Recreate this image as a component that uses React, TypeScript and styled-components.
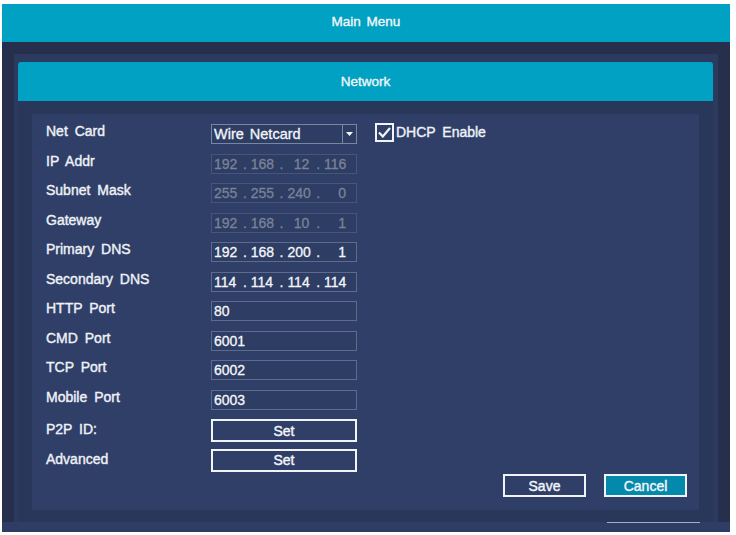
import styled, { createGlobalStyle } from 'styled-components'

const GlobalStyle = createGlobalStyle`
  html, body {
    margin: 0;
    padding: 0;
    background: #ffffff;
  }
  body {
    font-family: "Liberation Sans", Arial, sans-serif;
  }
`

const Screen = styled.div`
  width: 736px;
  height: 535px;
  box-sizing: border-box;
  padding: 4px 6px 3px 2px;
`

const Frame = styled.div`
  display: flex;
  flex-direction: column;
  height: 100%;
  background: #262f4c;
`

const TopBar = styled.div`
  height: 38px;
  box-sizing: border-box;
  padding-bottom: 4px;
  flex-shrink: 0;
  display: flex;
  align-items: center;
  justify-content: center;
  background: #00a1c2;
  color: #f2f6fa;
  font-size: 13.5px;
  -webkit-text-stroke: 0.35px #f2f6fa;
  word-spacing: 2px;
`

const FrameBody = styled.div`
  flex: 1;
  display: flex;
  flex-direction: column;
  padding: 12px 12px 0 12px;
`

const Window = styled.div`
  flex: 1;
  display: flex;
  flex-direction: column;
  background: #2c3a5f;
  padding: 8px 5px 0 4px;
`

const WindowHeader = styled.div`
  height: 39px;
  flex-shrink: 0;
  display: flex;
  align-items: center;
  justify-content: center;
  background: #00a1c2;
  border-radius: 3px 3px 0 0;
  color: #f2f6fa;
  font-size: 13.5px;
  -webkit-text-stroke: 0.35px #f2f6fa;
`

const WindowBody = styled.div`
  flex: 1;
  display: flex;
  background: #29375a;
  padding: 13px 14px 12px 14px;
`

const Content = styled.div`
  flex: 1;
  display: flex;
  flex-direction: column;
  background: #303f67;
  padding: 10px 12px 0 14px;
`

const Form = styled.div`
  display: grid;
  grid-template-columns: 165px 146px 1fr;
  grid-template-rows: repeat(11, 29.5px) 23px;
`

const Label = styled.div<{ $center?: boolean }>`
  color: #eef1f7;
  font-size: 14px;
  -webkit-text-stroke: 0.4px #eef1f7;
  word-spacing: 3px;
  line-height: ${(p) => (p.$center ? '23px' : '20px')};
  margin-top: ${(p) => (p.$center ? '-1px' : '-3px')};
  white-space: nowrap;
`

const Box = styled.div<{ $disabled?: boolean; $border?: string }>`
  box-sizing: border-box;
  height: 20px;
  width: 146px;
  display: flex;
  align-items: center;
  padding-left: 2px;
  border: 1px solid ${(p) => p.$border ?? (p.$disabled ? '#46557a' : '#5c6b8e')};
  background: #2e3d64;
  color: ${(p) => (p.$disabled ? '#7a8298' : '#f4f6fa')};
  -webkit-text-stroke: 0.3px ${(p) => (p.$disabled ? '#7a8298' : '#f4f6fa')};
  font-size: 14px;
  white-space: nowrap;
`

const SelectText = styled.span`
  flex: 1;
  word-spacing: 2px;
  font-size: 14.5px;
`

const SelectArrow = styled.div`
  width: 13px;
  height: 100%;
  border-left: 1px solid #7986a0;
  display: flex;
  align-items: center;
  justify-content: center;
`

const Octet = styled.span`
  width: 22px;
  text-align: right;
`

const Dot = styled.span`
  width: 14.7px;
  text-align: center;
  padding-left: 3px;
  box-sizing: border-box;
`

const CheckCell = styled.div`
  display: flex;
  align-items: flex-start;
  margin-left: 18px;
  margin-top: -1px;
  color: #eef1f7;
  font-size: 14px;
  -webkit-text-stroke: 0.4px #eef1f7;
  word-spacing: 3px;
`

const CheckBox = styled.div`
  box-sizing: border-box;
  width: 19px;
  height: 19px;
  border: 2px solid #f0f3f8;
  display: flex;
  align-items: center;
  justify-content: center;
  margin-right: 2px;
  -webkit-text-stroke: 0;
`

const CheckLabel = styled.span`
  line-height: 19px;
`

const OutlineButton = styled.div<{ $width: number; $fill?: string }>`
  box-sizing: border-box;
  width: ${(p) => p.$width}px;
  height: 23px;
  border: 2px solid #f0f3f8;
  background: ${(p) => p.$fill ?? 'transparent'};
  color: #f2f5fa;
  font-size: 14px;
  -webkit-text-stroke: 0.4px #f2f5fa;
  display: flex;
  align-items: center;
  justify-content: center;
`

const Actions = styled.div`
  display: flex;
  justify-content: flex-end;
  gap: 18px;
  margin-top: 2.5px;
`

const FrameFooter = styled.div`
  height: 10px;
  flex-shrink: 0;
  display: flex;
  justify-content: flex-end;
  background: #2f3c63;
  padding-right: 30px;
`

const FooterLine = styled.div`
  width: 93px;
  border-top: 1px solid #a3aecb;
`

function IpBox({ value, disabled }: { value: string[]; disabled?: boolean }) {
  return (
    <Box $disabled={disabled}>
      {value.map((o, i) => (
        <span key={i} style={{ display: 'contents' }}>
          {i > 0 && <Dot>.</Dot>}
          <Octet>{o}</Octet>
        </span>
      ))}
    </Box>
  )
}

function App() {
  return (
    <>
      <GlobalStyle />
      <Screen>
        <Frame>
          <TopBar>Main Menu</TopBar>
          <FrameBody>
            <Window>
              <WindowHeader>Network</WindowHeader>
              <WindowBody>
                <Content>
                  <Form>
                    <Label>Net Card</Label>
                    <Box $border="#7986a0" style={{ paddingRight: 0 }}>
                      <SelectText>Wire Netcard</SelectText>
                      <SelectArrow>
                        <svg width="7" height="4" viewBox="0 0 7 4">
                          <path d="M0 0 L7 0 L3.5 4 Z" fill="#f2f5fa" />
                        </svg>
                      </SelectArrow>
                    </Box>
                    <CheckCell>
                      <CheckBox>
                        <svg width="13" height="11" viewBox="0 0 13 11">
                          <path d="M1 5.5 L4.8 9.5 L12 1" fill="none" stroke="#f2f5fa" strokeWidth="2.2" />
                        </svg>
                      </CheckBox>
                      <CheckLabel>DHCP Enable</CheckLabel>
                    </CheckCell>

                    <Label>IP Addr</Label>
                    <IpBox value={['192', '168', '12', '116']} disabled />
                    <div />

                    <Label>Subnet Mask</Label>
                    <IpBox value={['255', '255', '240', '0']} disabled />
                    <div />

                    <Label>Gateway</Label>
                    <IpBox value={['192', '168', '10', '1']} disabled />
                    <div />

                    <Label>Primary DNS</Label>
                    <IpBox value={['192', '168', '200', '1']} />
                    <div />

                    <Label>Secondary DNS</Label>
                    <IpBox value={['114', '114', '114', '114']} />
                    <div />

                    <Label>HTTP Port</Label>
                    <Box>80</Box>
                    <div />

                    <Label>CMD Port</Label>
                    <Box>6001</Box>
                    <div />

                    <Label>TCP Port</Label>
                    <Box>6002</Box>
                    <div />

                    <Label>Mobile Port</Label>
                    <Box>6003</Box>
                    <div />

                    <Label $center>P2P ID:</Label>
                    <OutlineButton $width={146}>Set</OutlineButton>
                    <div />

                    <Label $center>Advanced</Label>
                    <OutlineButton $width={146}>Set</OutlineButton>
                    <div />
                  </Form>
                  <Actions>
                    <OutlineButton $width={83}>Save</OutlineButton>
                    <OutlineButton $width={83} $fill="#0389ab">
                      Cancel
                    </OutlineButton>
                  </Actions>
                </Content>
              </WindowBody>
            </Window>
          </FrameBody>
          <FrameFooter>
            <FooterLine />
          </FrameFooter>
        </Frame>
      </Screen>
    </>
  )
}

export default App
